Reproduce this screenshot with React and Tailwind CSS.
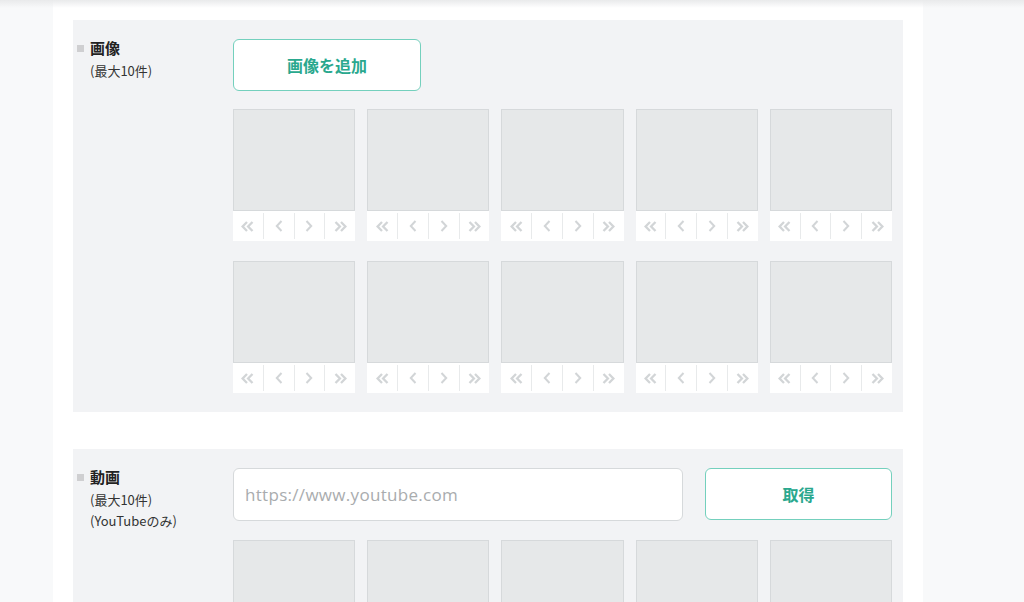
const font = { fontFamily: '"Noto Sans CJK JP", "Noto Sans", sans-serif' };

function Chevron({ dir, double }) {
  const flip = dir === "right" ? "scale(-1,1)" : undefined;
  if (double) {
    return (
      <svg width="13" height="11" viewBox="0 0 13 11" className="text-[#d2d5d7]">
        <g transform={flip} style={{ transformOrigin: "6.5px 5.5px" }} fill="none" stroke="currentColor" strokeWidth="2.3">
          <path d="M6 1 L1.6 5.5 L6 10" />
          <path d="M11.5 1 L7.1 5.5 L11.5 10" />
        </g>
      </svg>
    );
  }
  return (
    <svg width="8" height="12" viewBox="0 0 8 12" className="text-[#d2d5d7]">
      <g transform={flip} style={{ transformOrigin: "4px 6px" }} fill="none" stroke="currentColor" strokeWidth="2">
        <path d="M6.5 1 L1.8 6 L6.5 11" />
      </g>
    </svg>
  );
}

function Tile() {
  const icons = [
    { dir: "left", double: true },
    { dir: "left", double: false },
    { dir: "right", double: false },
    { dir: "right", double: true },
  ];
  return (
    <div className="flex flex-col">
      <div className="h-[102px] bg-[#e6e8e9] border border-[#d6d9db]" />
      <div className="h-[30px] bg-white flex items-center">
        {icons.map((ic, i) => (
          <div
            key={i}
            className={
              "flex-1 h-[26px] flex items-center justify-center " +
              (i > 0 ? "border-l border-[#e8eaeb]" : "")
            }
          >
            <Chevron dir={ic.dir} double={ic.double} />
          </div>
        ))}
      </div>
    </div>
  );
}

function Label({ title, notes }) {
  return (
    <div className="w-[160px] shrink-0 pl-[4px] -mt-[2px]">
      <div className="flex items-center gap-[6px]">
        <span className="w-[7px] h-[7px] bg-[#cfcfd1]" />
        <span className="text-[15px] font-bold text-[#222]">{title}</span>
      </div>
      {notes.map((n) => (
        <div key={n} className="pl-[13px] text-[13px] leading-[21px] text-[#333]">
          {n}
        </div>
      ))}
    </div>
  );
}

export default function App() {
  return (
    <div className="min-h-[602px] bg-[#f8f9fa] relative overflow-hidden" style={font}>
      <div className="absolute top-0 left-0 right-0 h-[8px] bg-gradient-to-b from-[#e9eaeb] to-transparent" />
      <div className="ml-[53px] w-[870px] bg-white min-h-[602px] px-[20px] pt-[20px]">
        {/* 画像 */}
        <section className="bg-[#f2f3f5] flex pt-[19px] pb-[19px] pr-[11px]">
          <Label title="画像" notes={["(最大10件)"]} />
          <div className="flex-1">
            <button className="w-[188px] h-[52px] bg-white border border-[#74d0bd] rounded-[6px] text-[16px] font-bold text-[#2aa88e]">
              画像を追加
            </button>
            <div className="grid grid-cols-5 gap-x-[12px] gap-y-[20px] mt-[18px]">
              {Array.from({ length: 10 }).map((_, i) => (
                <Tile key={i} />
              ))}
            </div>
          </div>
        </section>

        {/* 動画 */}
        <section className="bg-[#f2f3f5] flex pt-[19px] pb-[19px] pr-[11px] mt-[37px]">
          <Label title="動画" notes={["(最大10件)", "(YouTubeのみ)"]} />
          <div className="flex-1">
            <div className="flex gap-[22px]">
              <input
                placeholder="https://www.youtube.com"
                className="w-[450px] h-[53px] bg-white border border-[#d6d9db] rounded-[6px] px-[11px] text-[17px] tracking-[0.3px] placeholder:text-[#a9acae] outline-none"
                style={{ fontFamily: '"Open Sans", "Noto Sans", sans-serif' }}
              />
              <button className="flex-1 h-[52px] bg-white border border-[#74d0bd] rounded-[6px] text-[16px] font-bold text-[#2aa88e]">
                取得
              </button>
            </div>
            <div className="grid grid-cols-5 gap-x-[12px] gap-y-[20px] mt-[19px]">
              {Array.from({ length: 5 }).map((_, i) => (
                <Tile key={i} />
              ))}
            </div>
          </div>
        </section>
      </div>
    </div>
  );
}
